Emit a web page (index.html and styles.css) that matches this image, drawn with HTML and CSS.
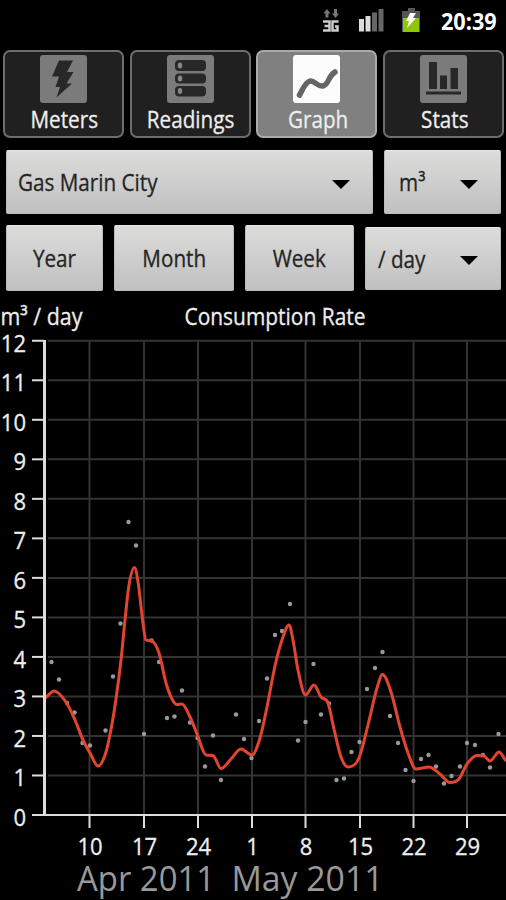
FILE: index.html
```html
<!DOCTYPE html>
<html lang="en">
<head>
<meta charset="utf-8">
<title>Meter Readings</title>
<link rel="stylesheet" href="styles.css">
</head>
<body>
<div class="status">
  <svg class="net" width="18" height="24" viewBox="0 0 18 24">
    <path class="arrow" d="M0.500 4.500 4 0 7.500 4.500H5.500V8.500H2.500V4.500ZM9 4.500H11V0H14V4.500H16L12.500 9Z"/>
    <path class="threeg" d="M0 12.500H6.500V21.500H0M1.500 17H6.500M15.500 12.500H9.500V21.500H14.500V17.500H12"/>
  </svg>
  <svg class="signal" width="25" height="23" viewBox="0 0 25 23">
    <path fill="#ddd" d="M0 10H5V22.500H0ZM6.500 7H11.500V22.500H6.500Z"/><path fill="#666" d="M13 3.500H18V22.500H13ZM19.500 0H24.500V22.500H19.500Z"/>
  </svg>
  <svg class="battery" width="18" height="25" viewBox="0 0 18 25">
    <path fill="#555" d="M6 0H13V3H18V24H0V3H6Z"/><path fill="#8fc60a" d="M1 10H17V24H1Z"/>
    <path fill="#fff" d="M8 5H14L11 10H14L5 20 7 13H4Z"/>
  </svg>
  <span class="clock"><span class="t">20:39</span></span>
</div>

<nav class="tabs">
  <div class="tab">
    <svg width="47" height="48" viewBox="0 0 47 48"><rect class="tile" width="47" height="48" rx="3"/><path class="ink" d="M19 5.500H33L27 17H33.500L26.500 28.500H32L16.500 42.500 20 32H15.500L19 21.500H12Z"/></svg>
    <span class="t">Meters</span>
  </div>
  <div class="tab">
    <svg width="47" height="48" viewBox="0 0 47 48"><rect class="tile" width="47" height="48" rx="3"/>
      <g class="ink"><rect x="8" y="5" width="31" height="11" rx="4"/><rect x="8" y="18.500" width="31" height="10" rx="4"/><rect x="8" y="31" width="31" height="10.500" rx="4"/></g>
      <g fill="#888"><ellipse cx="13" cy="10.500" rx="2.200" ry="3"/><ellipse cx="13" cy="23.500" rx="2.200" ry="3"/><ellipse cx="13" cy="36" rx="2.200" ry="3"/></g></svg>
    <span class="t">Readings</span>
  </div>
  <div class="tab on">
    <svg width="47" height="48" viewBox="0 0 47 48"><rect class="tile" width="47" height="48" rx="3"/><path class="trend" d="M6.500 40C10 34 12 28 16 26.500C21 24 24 32 30 31C36 29.500 35 21 42 17"/></svg>
    <span class="t">Graph</span>
  </div>
  <div class="tab">
    <svg width="47" height="48" viewBox="0 0 47 48"><rect class="tile" width="47" height="48" rx="3"/><path class="ink" d="M9 7H17V34H9ZM20 20.500H27V34H20ZM30.500 13H38V34H30.500ZM6 36.500H41V39.500H6Z"/></svg>
    <span class="t">Stats</span>
  </div>
</nav>

<div class="row first">
  <div class="btn drop meter"><span class="t">Gas Marin City</span><i class="caret"></i></div>
  <div class="btn drop unit"><span class="t">m³</span><i class="caret"></i></div>
</div>
<div class="row second">
  <div class="btn year"><span class="t">Year</span></div>
  <div class="btn month"><span class="t">Month</span></div>
  <div class="btn week"><span class="t">Week</span></div>
  <div class="btn drop rate"><span class="t">/ day</span><i class="caret"></i></div>
</div>

<svg class="chart" id="chart" width="506" height="600" viewBox="0 300 506 600">
  <text x="0.500" y="325" textLength="82" lengthAdjust="spacingAndGlyphs">m³ / day</text>
  <text x="184.500" y="325" textLength="181" lengthAdjust="spacingAndGlyphs">Consumption Rate</text>
  <g id="grid"></g>
  <g id="dots"></g>
  <path id="curve"/>
  <g id="axes"></g>
  <text class="date" x="77" y="891" textLength="138" lengthAdjust="spacingAndGlyphs">Apr 2011</text>
  <text class="date" x="231.500" y="891" textLength="152" lengthAdjust="spacingAndGlyphs">May 2011</text>
</svg>
<script src="chart.js"></script>
</body>
</html>
```
FILE: styles.css
```css
* { box-sizing: border-box; }
body {
  margin: 0;
  width: 506px;
  height: 900px;
  overflow: hidden;
  background: #000;
  font-family: "Open Sans", "Noto Sans", sans-serif;
  font-size: 23.5px;
  color: #eee;
}
svg { display: block; flex: none; }
.t { display: block; white-space: nowrap; transform: scaleX(.88); -webkit-text-stroke: .3px currentColor; }

.status { display: flex; height: 50px; padding-top: 9px; align-items: flex-start; }
.net { margin-left: 323px; overflow: visible; }
.arrow { fill: #777; }
.threeg { fill: none; stroke: #ccc; stroke-width: 2.500; }
.signal { margin-left: 18px; }
.battery { margin: -1px 0 0 18px; }
.clock { margin-left: 21px; font-weight: 700; line-height: 24px; color: #fff; }
.clock .t { transform-origin: left; transform: scaleX(.94); font-size: 23px; -webkit-text-stroke: 0; }

.tabs { display: grid; grid-template-columns: repeat(4, 121px); column-gap: 5.700px; padding-left: 3px; height: 88px; }
.tab {
  display: flex;
  flex-direction: column;
  align-items: center;
  height: 88px;
  padding-top: 3px;
  border: 2px solid #6d6d6d;
  border-radius: 7px;
  background: #202020;
}
.tab .t { line-height: 32px; padding-left: 2px; }
.tile { fill: #7b7b7b; }
.ink { fill: #282828; }
.on { background: #808080; border-color: #aaa; }
.on .tile { fill: #fcfcfc; }
.trend { fill: none; stroke: #656565; stroke-width: 5.5; stroke-linecap: round; }

.row { display: flex; }
.first { padding: 12px 0 0 6px; gap: 11px; height: 76px; }
.second { padding-left: 6px; gap: 11px; height: 86px; padding-top: 11px; }
.btn {
  display: flex;
  align-items: center;
  justify-content: center;
  height: 64px;
  border: 1px solid #bbb;
  border-top-color: #e8e8e8;
  border-radius: 2px;
  background: linear-gradient(#dcdcdb, #c0c0c0);
  color: #252525;
}
.drop { justify-content: space-between; }
.drop .t { transform-origin: left; }
.meter { width: 367px; padding: 0 22px 0 11px; }
.unit { width: 117px; padding: 0 22px 0 14px; }
.year { width: 97px; }
.month { width: 120px; }
.week { width: 109px; }
.rate { width: 136px; padding: 0 22px 0 12px; height: 63px; margin-top: 2px; }
.second .btn:not(.rate) { height: 66px; }
.caret { border: 9.500px solid transparent; border-top-color: #000; border-bottom: 0; margin-top: 4px; }

.chart text { fill: #eee; font-size: 23.5px; stroke: #eee; stroke-width: .3px; }
.chart .date { fill: #999; font-size: 35px; stroke: none; }
#grid { stroke: #333; stroke-width: 2; }
#axes { stroke: #ddd; stroke-width: 2; }
#dots { fill: #999; }
#curve { fill: none; stroke: #e2452f; stroke-width: 3; stroke-linejoin: round; }
```
FILE: chart.js
```js
const NS = "http://www.w3.org/2000/svg";
const add = (id, tag, attrs, text) => {
  const el = document.createElementNS(NS, tag);
  for (const k in attrs) el.setAttribute(k, attrs[k]);
  if (text !== undefined) el.textContent = text;
  document.getElementById(id).append(el);
};
const line = (id, x1, y1, x2, y2, extra) => add(id, "line", { x1, y1, x2, y2, ...extra });
const label = (x, y, s) => add("axes", "text", {
  x, y, textLength: s.length * 12.6, lengthAdjust: "spacingAndGlyphs"
}, s);

for (let v = 0; v <= 12; v++) {
  const y = 815 - v * 39.52;
  if (v) line("grid", 48, y, 506, y);
  line("axes", 32, y, 44, y);
  const s = String(v);
  label(26 - s.length * 12.6, y + 11, s);
}
[[89.5, "10"], [144, "17"], [198, "24"], [252, "1"], [305.5, "8"], [360, "15"], [413.5, "22"], [467, "29"]]
  .forEach(([x, s]) => {
    line("grid", x, 340, x, 814);
    line("axes", x, 816, x, 828);
    label(x + 0.5 - s.length * 6.3, 854.5, s);
  });
line("axes", 44.5, 340, 44.5, 816, { "stroke-width": 3 });
line("axes", 44, 815, 506, 815);

const dots = [[51.5,662],[59,679.5],[67,703],[74.5,712.5],[82.5,743],[90,745.5],[105.5,730.5],[113,676.5],[120.5,623.5],[128.5,522],[136,545.5],[144,734],[151.5,640.5],[159,662],[167,718],[174.5,716.5],[182,690.5],[190,722.5],[197.5,738],[205,766.5],[213,735.5],[221,780],[236,714.5],[244,739],[251.5,758],[259,721],[267,678.5],[275,635],[282,631],[290,604],[298,740.5],[305.5,722],[313.5,664],[321,714.5],[329,703.5],[336.5,780],[344,778.5],[351.5,752],[359.5,742],[367,689],[375,668],[382.5,652],[390,716],[398,743],[405.5,770],[413.5,781],[421,759],[428.5,755],[436,766.5],[444,783.5],[451.5,776],[460,766.5],[467,743],[475,745],[483,755],[490,767.5],[498.5,734]];
dots.forEach(([cx, cy]) => add("dots", "circle", { cx, cy, r: 2.2 }));

const p = [[45.5,698],[54,691],[66,702],[75,720],[83,740],[90,753],[98,766],[106,752],[112,724],[116,699],[121,660],[125,620],[129,585],[134.5,567.5],[138.5,585],[142,615],[146,640],[152,641],[159,653],[166,683],[172,699],[177,704.5],[182,704],[190,717],[197,734],[206,755],[213,755.5],[221,768.5],[231,759],[241,749],[252,755],[260,738],[267,707],[275,666],[282,640],[289,625],[293,640],[298,670],[305.5,695],[314,685],[321,697],[328,703],[334,729],[341,757],[348,767],[359,758],[368,725],[377,688],[382.5,674.5],[391,692],[400,727],[408,753],[416,769],[429,767],[440,774],[450,782.5],[459,779],[467,764],[477,755.5],[484,756],[490,761],[499,752],[506,761]];

// Slopes flatten at local extremes so that the curve never overshoots a point.
const slope = p.map((q, i) => {
  if (!i || i === p.length - 1) return (p[Math.min(i + 1, p.length - 1)][1] - p[Math.max(i - 1, 0)][1]) / 8;
  const a = (q[1] - p[i - 1][1]) / (q[0] - p[i - 1][0]);
  const b = (p[i + 1][1] - q[1]) / (p[i + 1][0] - q[0]);
  if (a * b <= 0) return 0;
  return Math.sign(a) * Math.min(Math.abs(a + b) / 2, 3 * Math.abs(a), 3 * Math.abs(b));
});
let d = "M" + p[0];
for (let i = 1; i < p.length; i++) {
  const [x0, y0] = p[i - 1], [x1, y1] = p[i], h = (x1 - x0) / 3;
  d += `C${x0 + h} ${y0 + slope[i - 1] * h} ${x1 - h} ${y1 - slope[i] * h} ${x1} ${y1}`;
}
document.getElementById("curve").setAttribute("d", d);
```
